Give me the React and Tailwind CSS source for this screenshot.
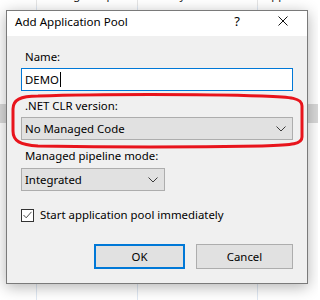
import React from "react";

const cols = [
  { w: "w-[37px]", label: ".NET CLR Ver", end: true },
  { w: "w-[101px]", label: "Managed Pipelin" },
  { w: "w-[120px]", label: "Identity" },
  { w: "flex-1", label: "Applicatio" },
];

function GridRow({ className = "" }) {
  return (
    <div className={`flex ${className}`}>
      {cols.map((c, i) => (
        <div key={i} className={`${c.w} ${i < 3 ? "border-r border-[#dfe8f3]" : ""}`} />
      ))}
    </div>
  );
}

function Chevron() {
  return (
    <svg width="10" height="6" viewBox="0 0 10 6" className="shrink-0">
      <path d="M0.5 0.5 L5 5 L9.5 0.5" fill="none" stroke="#3c3c3c" strokeWidth="1" />
    </svg>
  );
}

function Select({ value, width }) {
  return (
    <div className={`${width} h-[23px] flex items-center justify-between pl-[3px] pr-[6px] bg-[#e1e1e1] border border-[#adadad] text-black`}>
      <span>{value}</span>
      <Chevron />
    </div>
  );
}

export default function App() {
  return (
    <div className="relative w-[318px] h-[300px] overflow-hidden bg-white font-['Noto_Sans',sans-serif] text-black">
      {/* list view behind the dialog */}
      <div className="flex flex-col h-full">
        <div className="flex h-[22px] -mt-[16px] shrink-0 bg-white text-[11.4px] leading-[22px] text-[#1e1e1e]">
          {cols.map((c, i) => (
            <div
              key={i}
              className={`${c.w} overflow-hidden whitespace-nowrap flex ${c.end ? "justify-end pr-[8px]" : "pl-[6px]"} ${i < 3 ? "border-r border-[#e5e5e5]" : ""}`}
            >
              {c.label}
            </div>
          ))}
        </div>
        <GridRow className="h-[98px] shrink-0" />
        <GridRow className="h-[19px] shrink-0 bg-[#d9d9d9]" />
        <GridRow className="flex-1" />
      </div>

      {/* dialog window */}
      <div className="absolute left-[6px] top-[10px] w-[302px] h-[274px] border border-[#7a7a7a] bg-[#f0f0f0] shadow-[0_3px_14px_rgba(0,0,0,0.3)] flex flex-col">
        <div className="h-[25px] bg-white flex items-start shrink-0">
          <span className="pl-[8px] pt-[3px] text-[11.6px] leading-[16px] flex-1">Add Application Pool</span>
          <span className="pt-[2px] text-[13px] leading-[16px] mr-[38px]">?</span>
          <svg width="10" height="10" viewBox="0 0 10 10" className="mt-[5px] mr-[19px]">
            <path d="M0.5 0.5 L9.5 9.5 M9.5 0.5 L0.5 9.5" stroke="#111" strokeWidth="1" />
          </svg>
        </div>

        <div className="flex flex-col pl-[14px] pt-[13px] text-[11.4px] leading-[16px]">
          <span className="pl-[4px]">Name:</span>
          <div className="mt-[3px] w-[272px] h-[23px] flex items-center pl-[3px] bg-white border border-[#0078d7]">
            <span>DEMO</span>
            <span className="w-[1px] h-[15px] bg-black ml-[1px]" />
          </div>

          <span className="pl-[4px] mt-[7px]">.NET CLR version:</span>
          <div className="mt-[3px]">
            <Select value="No Managed Code" width="w-[272px]" />
          </div>

          <span className="pl-[4px] mt-[8px]">Managed pipeline mode:</span>
          <div className="mt-[4px]">
            <Select value="Integrated" width="w-[144px]" />
          </div>

          <div className="mt-[16px] flex items-center gap-[6px]">
            <div className="w-[13px] h-[13px] border border-[#333] bg-white flex items-center justify-center">
              <svg width="9" height="8" viewBox="0 0 9 8">
                <path d="M0.5 4 L3.2 6.8 L8.5 0.8" fill="none" stroke="#4a4a4a" strokeWidth="1" />
              </svg>
            </div>
            <span>Start application pool immediately</span>
          </div>

          <div className="mt-[21px] flex gap-[11px] pl-[73px]">
            <div className="w-[91px] h-[25px] flex items-center justify-center bg-[#e1e1e1] border-2 border-[#0078d7]">OK</div>
            <div className="w-[97px] h-[25px] flex items-center justify-center bg-[#e1e1e1] border border-[#adadad]">Cancel</div>
          </div>
        </div>
      </div>

      {/* red hand-drawn annotation */}
      <svg className="absolute left-0 top-0 pointer-events-none" width="318" height="300" viewBox="0 0 318 300">
        <path
          d="M38 96 C100 94 200 94 262 96 C292 97 302 98 302 106 L302 137 C302 144 294 145 262 146 C200 147 100 147 38 146 C20 145 13 141 13 131 L13 109 C13 100 20 96 38 96 Z"
          fill="none"
          stroke="#e8141c"
          strokeWidth="3"
        />
      </svg>
    </div>
  );
}
